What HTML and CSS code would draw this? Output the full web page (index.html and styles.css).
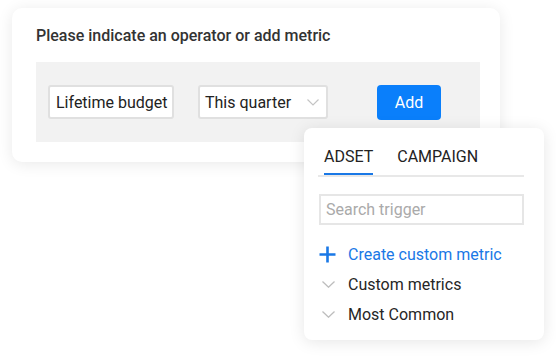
FILE: index.html
```html
<!DOCTYPE html>
<html>
<head>
<meta charset="utf-8">
<link rel="stylesheet" href="styles.css">
</head>
<body>
<div class="stage">
  <div class="card">
    <h1 class="title">Please indicate an operator or add metric</h1>
    <div class="panel">
      <div class="field">Lifetime budget</div>
      <div class="select">
        <span>This quarter</span>
        <svg class="chev" width="12" height="7" viewBox="0 0 12 7"><path d="M0.5 0.5 L6 6 L11.5 0.5" fill="none" stroke="#c4c4c4" stroke-width="1.2"/></svg>
      </div>
      <button class="btn">Add</button>
    </div>
  </div>

  <div class="dropdown">
    <div class="tabs">
      <div class="tab active">ADSET</div>
      <div class="tab">CAMPAIGN</div>
    </div>
    <input class="search" type="text" placeholder="Search trigger">
    <div class="list">
      <div class="row create">
        <span class="ico"><svg width="17" height="17" viewBox="0 0 17 17"><path d="M8.5 0.5 V16.5 M0.5 8.5 H16.5" stroke="#1a78e6" stroke-width="2.6" fill="none"/></svg></span>
        <span>Create custom metric</span>
      </div>
      <div class="row">
        <span class="ico"><svg class="rchev" width="13" height="7" viewBox="0 0 13 7"><path d="M0.5 0.5 L6.5 6.2 L12.5 0.5" fill="none" stroke="#bdbdbd" stroke-width="1.3"/></svg></span>
        <span>Custom metrics</span>
      </div>
      <div class="row">
        <span class="ico"><svg class="rchev" width="13" height="7" viewBox="0 0 13 7"><path d="M0.5 0.5 L6.5 6.2 L12.5 0.5" fill="none" stroke="#bdbdbd" stroke-width="1.3"/></svg></span>
        <span>Most Common</span>
      </div>
    </div>
  </div>
</div>
</body>
</html>
```

FILE: styles.css
```css
* { box-sizing: border-box; }
html, body { margin: 0; padding: 0; background: #fff; }
body { font-family: Roboto, "Liberation Sans", Arial, sans-serif; color: #262626; }

.stage {
  position: relative;
  width: 556px;
  height: 356px;
  padding: 8px 0 0 12px;
}

.card {
  width: 488px;
  height: 154px;
  background: #fff;
  border-radius: 10px;
  box-shadow: 0 2px 16px rgba(0, 0, 0, 0.09);
  padding: 19px 20px 20px 24px;
}

.title {
  margin: 0;
  font-size: 16px;
  line-height: 18px;
  font-weight: 500;
  color: #333;
}

.panel {
  margin-top: 17px;
  height: 80px;
  background: #f2f2f2;
  display: flex;
  align-items: center;
  padding: 0 12px;
}

.field, .select {
  height: 34px;
  background: #fff;
  border: 2px solid #e0e0e0;
  border-radius: 3px;
  font-size: 16px;
  color: #222;
  display: flex;
  align-items: center;
}

.field {
  width: 126px;
  padding-left: 6px;
}

.select {
  width: 130px;
  margin-left: 24px;
  padding: 0 7px 0 5px;
  justify-content: space-between;
}

.chev { margin-top: 1px; }

.btn {
  margin-left: 49px;
  width: 64px;
  height: 35px;
  border: none;
  border-radius: 4px;
  background: #0a7ffb;
  color: #fff;
  font-family: inherit;
  font-size: 16px;
  padding: 0;
}

.dropdown {
  position: absolute;
  left: 304px;
  top: 128px;
  width: 240px;
  height: 212px;
  background: #fff;
  border-radius: 8px;
  box-shadow: 0 2px 16px rgba(0, 0, 0, 0.10);
  padding: 20px 20px 11px 14px;
}

.tabs {
  display: flex;
  gap: 24px;
  padding-left: 6px;
  border-bottom: 2px solid #e8e8e8;
}

.tab {
  font-size: 16px;
  line-height: 18px;
  color: #222;
  padding-bottom: 7px;
  border-bottom: 2px solid transparent;
}

.tab.active { border-bottom-color: #1a78e6; }

.search {
  display: block;
  margin: 17px 0 0 1px;
  width: 205px;
  height: 31px;
  border: 2px solid #e6e6e6;
  border-radius: 0;
  padding: 0 0 0 5px;
  font-family: inherit;
  font-size: 16px;
  color: #222;
  outline: none;
}

.search::placeholder { color: #aaa; }

.list { margin-top: 14px; }

.row {
  height: 30px;
  display: flex;
  align-items: center;
  font-size: 16px;
  color: #262626;
}

.row.create { color: #1a78e6; }

.ico {
  width: 30px;
  display: flex;
  align-items: center;
  padding-left: 1px;
}

.rchev { margin-left: 3px; }
```
